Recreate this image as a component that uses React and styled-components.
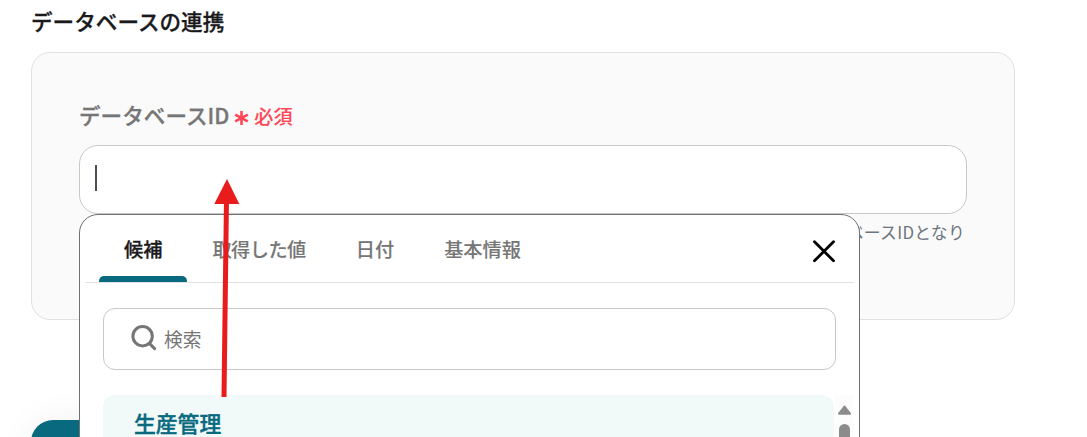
import React from 'react'
import styled, { createGlobalStyle } from 'styled-components'

const GlobalStyle = createGlobalStyle`
    * {
        box-sizing: border-box;
    }
    body {
        margin: 0;
        background-color: #fff;
        font-family: "Noto Sans CJK JP", "Noto Sans", sans-serif;
    }
`;

const Page = styled.main`
    position: relative;
    height: 437px;
    padding: 5px 72px 0 31px;
    overflow: hidden;
`;

const Title = styled.h2`
    margin: 0 0 15px;
    font-size: 21.6px;
    font-weight: 500;
    line-height: 32px;
    color: #1a1a1c;
    -webkit-text-stroke: 0.3px;
`;

const Card = styled.section`
    height: 268px;
    padding: 44px 47px 0;
    border: 1px solid #dee0e3;
    border-radius: 19px;
    background-color: #fafafa;
`;

const Label = styled.label`
    display: flex;
    align-items: center;
    height: 34px;
    margin-bottom: 14px;
    font-size: 21.6px;
    font-weight: 500;
    color: #767676;
    -webkit-text-stroke: 0.3px;
`;

const Required = styled.span`
    display: flex;
    align-items: center;
    gap: 5px;
    margin: 4px 0 0 5px;
    font-size: 19.2px;
    color: #ff4757;
    -webkit-text-stroke: 0.1px;
    svg {
        margin-top: 3px;
    }
`;

const Field = styled.div`
    display: flex;
    align-items: center;
    height: 69px;
    padding: 0 15px 3px;
    border: 1px solid #c8c8cb;
    border-radius: 19px;
    background-color: #fff;
`;

const Caret = styled.span`
    width: 2px;
    height: 26px;
    background-color: #495057;
`;

const Helper = styled.p`
    margin: 6px 2px 0 0;
    font-size: 16.8px;
    line-height: 25px;
    letter-spacing: 0.3px;
    text-align: right;
    color: #6c757d;
`;

const SaveButton = styled.button`
    display: block;
    width: 180px;
    height: 60px;
    margin-top: 100px;
    border: none;
    border-radius: 22px;
    background-color: #08697f;
    box-shadow: 0 0 36px rgba(0, 0, 0, 0.06);
`;

const Popup = styled.div`
    position: absolute;
    top: 214px;
    left: 79px;
    width: 781px;
    height: 300px;
    padding: 0 5px;
    border: 1px solid #707070;
    border-radius: 19px;
    background-color: #fff;
`;

const TabBar = styled.div`
    display: flex;
    height: 68px;
    padding: 0 18.5px 0 14px;
    border-bottom: 1px solid #e2e2e4;
`;

const Tab = styled.div`
    display: flex;
    flex-direction: column;
    justify-content: space-between;
    padding-top: 20px;
    font-size: 19.2px;
    font-weight: 500;
    line-height: 28px;
    color: ${({ $active }) => ($active ? '#1a1a1c' : '#767676')};
    -webkit-text-stroke: ${({ $active }) => ($active ? '0.3px' : '0.1px')};
    span {
        padding: 0 25px;
        letter-spacing: ${({ $tight }) => ($tight ? '-0.5px' : 'normal')};
    }
    &::after {
        content: '';
        height: 6px;
        border-radius: 5px 5px 0 0;
        background-color: ${({ $active }) => ($active ? '#08697f' : 'transparent')};
    }
`;

const CloseIcon = styled.svg`
    width: 24px;
    height: 24px;
    margin: 24px 0 0 auto;
`;

const SearchBox = styled.div`
    display: flex;
    align-items: center;
    gap: 7px;
    height: 62px;
    margin: 25px 18px 0;
    padding-left: 27px;
    border: 1px solid #c8c8cb;
    border-radius: 12px;
    font-size: 18.8px;
    color: #767676;
    svg {
        width: 26px;
        height: 26px;
        margin-bottom: 3px;
    }
    span {
        margin-bottom: 2px;
    }
`;

const List = styled.div`
    display: flex;
    gap: 1px;
    margin: 25px 0 0 18px;
`;

const Option = styled.div`
    width: 731px;
    height: 70px;
    padding: 12px 31px;
    border-radius: 12px;
    background-color: #f1faf9;
    font-size: 21.8px;
    font-weight: 500;
    line-height: 32px;
    color: #08697f;
    -webkit-text-stroke: 0.4px;
`;

const ScrollBar = styled.div`
    display: flex;
    flex-direction: column;
    align-items: center;
    gap: 9px;
    width: 19px;
    padding-top: 10px;
    background-color: #fcfcfc;
    svg {
        flex: none;
        width: 13px;
        height: 10px;
    }
`;

const Thumb = styled.div`
    width: 11px;
    height: 50px;
    border-radius: 6px;
    background-color: #8b8b8b;
`;

const Arrow = styled.svg`
    position: absolute;
    top: 178px;
    left: 210px;
    width: 34px;
    height: 220px;
`;

function Asterisk() {
    return (
        <svg width="15" height="16" viewBox="0 0 15 16" fill="none" stroke="currentColor" strokeWidth="2.6">
            <path d="M7.5 1v14M1.2 4.6l12.6 6.8M13.8 4.6L1.2 11.4" />
        </svg>
    )
}

const tabs = ['候補', '取得した値', '日付', '基本情報']

function SuggestPopup() {
    return (
        <Popup>
            <TabBar>
                {tabs.map((name, i) => (
                    <Tab key={name} $active={i === 0} $tight={i === 1}>
                        <span>{name}</span>
                    </Tab>
                ))}
                <CloseIcon viewBox="0 0 24 24" fill="none" stroke="#000" strokeWidth="2.8" strokeLinecap="round">
                    <path d="M2.5 2.8l19 19M21.5 2.8l-19 19" />
                </CloseIcon>
            </TabBar>
            <SearchBox>
                <svg viewBox="0 0 26 26" fill="none" stroke="currentColor" strokeWidth="3" strokeLinecap="round">
                    <circle cx="11.6" cy="11.2" r="9.7" />
                    <path d="M18.6 18.6l5 5" />
                </svg>
                <span>検索</span>
            </SearchBox>
            <List>
                <Option>生産管理</Option>
                <ScrollBar>
                    <svg viewBox="0 0 13 10" fill="#8b8b8b" stroke="#8b8b8b" strokeWidth="2" strokeLinejoin="round">
                        <path d="M6.5 1.5L12 8.7H1z" />
                    </svg>
                    <Thumb />
                </ScrollBar>
            </List>
        </Popup>
    )
}

function App() {
    return (
        <Page>
            <GlobalStyle />
            <Title>データベースの連携</Title>
            <Card>
                <Label>
                    データベースID
                    <Required>
                        <Asterisk />
                        必須
                    </Required>
                </Label>
                <Field>
                    <Caret />
                </Field>
                <Helper>ベースIDとなり</Helper>
            </Card>
            <SaveButton />
            <SuggestPopup />
            <Arrow viewBox="0 0 34 220">
                <path d="M16.5 20L14 219" stroke="#e81c1c" strokeWidth="5" />
                <path d="M17 1L29.3 26H4.3z" fill="#e81c1c" />
            </Arrow>
        </Page>
    )
}

export default App
